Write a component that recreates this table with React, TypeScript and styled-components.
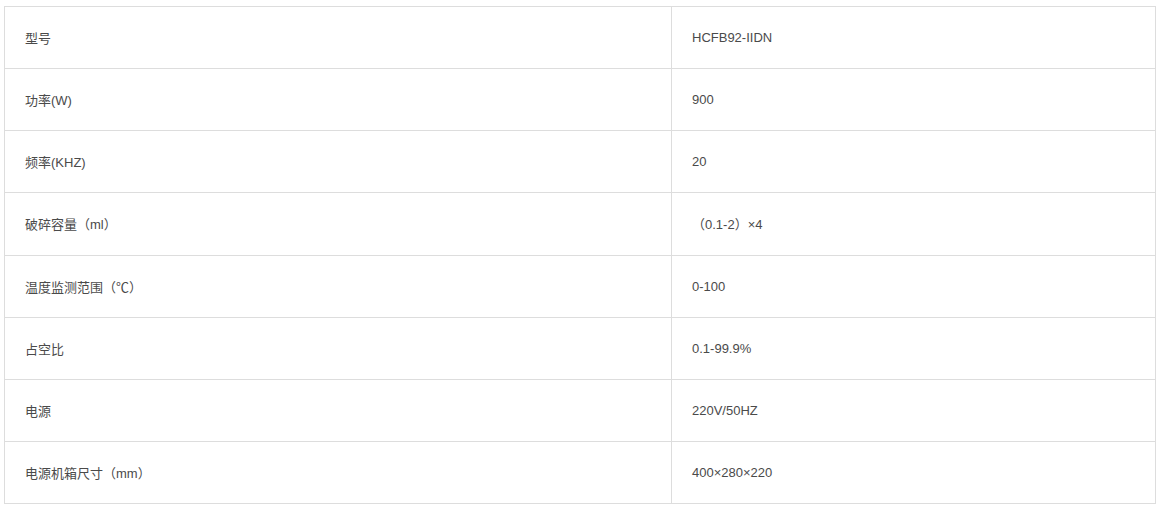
import React from 'react';
import styled, { createGlobalStyle } from 'styled-components';

const GlobalStyle = createGlobalStyle`
    html, body {
        margin: 0;
        padding: 0;
        background: #ffffff;
    }
`;

const specs: [string, string][] = [
    ['型号', 'HCFB92-IIDN'],
    ['功率(W)', '900'],
    ['频率(KHZ)', '20'],
    ['破碎容量（ml）', '（0.1-2）×4'],
    ['温度监测范围（℃）', '0-100'],
    ['占空比', '0.1-99.9%'],
    ['电源', '220V/50HZ'],
    ['电源机箱尺寸（mm）', '400×280×220'],
];

const App: React.FunctionComponent = () => {
    return (
        <Page>
            <GlobalStyle />
            <SpecTable>
                <tbody>
                    {specs.map(([label, value]) => (
                        <Row key={label}>
                            <LabelCell>{label}</LabelCell>
                            <ValueCell>{value}</ValueCell>
                        </Row>
                    ))}
                </tbody>
            </SpecTable>
        </Page>
    );
};

export default App;

const Page = styled.div`
    padding: 6px 4px 0 4px;
    font-family: 'Liberation Sans', 'Noto Sans CJK SC', sans-serif;
`;

const SpecTable = styled.table`
    width: 1152px;
    border-collapse: collapse;
    table-layout: fixed;
    border: 1px solid #dddddd;
`;

const Row = styled.tr`
    height: 62.125px;
`;

const Cell = styled.td`
    border: 1px solid #dddddd;
    padding: 0 20px;
    font-size: 13px;
    color: #4a4a4a;
    vertical-align: middle;
    white-space: nowrap;
`;

const LabelCell = styled(Cell)`
    width: 626px;
`;

const ValueCell = styled(Cell)``;
